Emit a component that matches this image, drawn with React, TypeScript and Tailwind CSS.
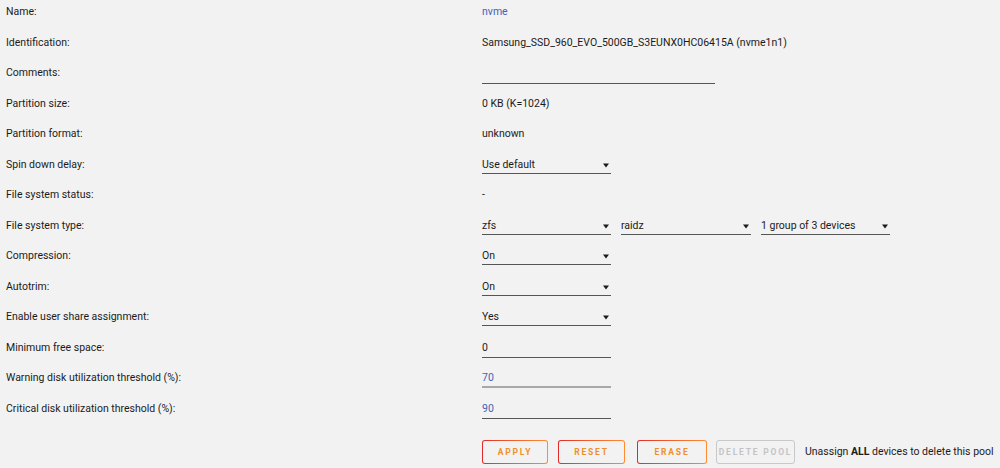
import type { ReactNode } from 'react';

function Caret() {
  return (
    <svg width="6" height="6" viewBox="0 0 6 6" className="shrink-0">
      <path d="M0 1.5h6L3 5.5z" fill="#1c1b1b" />
    </svg>
  );
}

function Select({ value, width = 'w-[129px]' }: { value: string; width?: string }) {
  return (
    <div className={`${width} h-[17px] flex items-start justify-between border-b border-[#555] pr-[2px] leading-4`}>
      <span>{value}</span>
      <span className="pt-[5px]">
        <Caret />
      </span>
    </div>
  );
}

function Input({ value, blue = false, light = false }: { value: string; blue?: boolean; light?: boolean }) {
  return (
    <div
      className={`w-[129px] h-[18px] leading-4 ${light ? 'border-b-2 border-[#a8a8a8]' : 'border-b border-[#555]'} ${
        blue ? 'text-[#3f63b8]' : ''
      }`}
    >
      {value}
    </div>
  );
}

function Row({ label, children }: { label: string; children: ReactNode }) {
  return (
    <div className="flex h-[30.5px] items-start">
      <div className="w-[482px] pl-[6px] leading-4">{label}</div>
      <div className="flex gap-[10px] leading-4">{children}</div>
    </div>
  );
}

function Btn({ label, width, disabled = false }: { label: string; width: string; disabled?: boolean }) {
  if (disabled) {
    return (
      <div
        className={`${width} h-[24px] shrink-0 whitespace-nowrap rounded-[3px] border border-[#c8c8c8] flex items-center justify-center text-[8.5px] font-bold tracking-[1.8px] text-[#c4c4c4]`}
      >
        {label}
      </div>
    );
  }
  return (
    <div className={`${width} h-[24px] shrink-0 rounded-[3px] p-px bg-gradient-to-r from-[#e22828] to-[#ff8c2f]`}>
      <div className="w-full h-full rounded-[2px] bg-[#f2f2f2] flex items-center justify-center text-[8.5px] font-bold tracking-[1.8px] text-[#f0902a]">
        {label}
      </div>
    </div>
  );
}

export default function App() {
  return (
    <div
      className="w-[1000px] h-[468px] bg-[#f2f2f2] text-[#1c1b1b] text-[10.5px] pt-[4px] overflow-hidden"
      style={{ fontFamily: 'Roboto, "Open Sans", sans-serif' }}
    >
      <Row label="Name:">
        <span className="text-[#3f63b8]">nvme</span>
      </Row>
      <Row label="Identification:">
        <span>Samsung_SSD_960_EVO_500GB_S3EUNX0HC06415A (nvme1n1)</span>
      </Row>
      <Row label="Comments:">
        <div className="w-[233px] h-[19px] border-b border-[#555]" />
      </Row>
      <Row label="Partition size:">
        <span>0 KB (K=1024)</span>
      </Row>
      <Row label="Partition format:">
        <span>unknown</span>
      </Row>
      <Row label="Spin down delay:">
        <Select value="Use default" />
      </Row>
      <Row label="File system status:">
        <span>-</span>
      </Row>
      <Row label="File system type:">
        <Select value="zfs" />
        <Select value="raidz" width="w-[130px]" />
        <Select value="1 group of 3 devices" />
      </Row>
      <Row label="Compression:">
        <Select value="On" />
      </Row>
      <Row label="Autotrim:">
        <Select value="On" />
      </Row>
      <Row label="Enable user share assignment:">
        <Select value="Yes" />
      </Row>
      <Row label="Minimum free space:">
        <Input value="0" />
      </Row>
      <Row label="Warning disk utilization threshold (%):">
        <Input value="70" blue light />
      </Row>
      <Row label="Critical disk utilization threshold (%):">
        <Input value="90" blue />
      </Row>
      <div className="flex items-center h-[24px] mt-[9px] pl-[482px] whitespace-nowrap">
        <Btn label="APPLY" width="w-[66px]" />
        <div className="w-[10px] shrink-0" />
        <Btn label="RESET" width="w-[67px]" />
        <div className="w-[12px] shrink-0" />
        <Btn label="ERASE" width="w-[70px]" />
        <div className="w-[9px] shrink-0" />
        <Btn label="DELETE POOL" width="w-[79px]" disabled />
        <span className="ml-[10px]">
          Unassign <b>ALL</b> devices to delete this pool
        </span>
      </div>
    </div>
  );
}
